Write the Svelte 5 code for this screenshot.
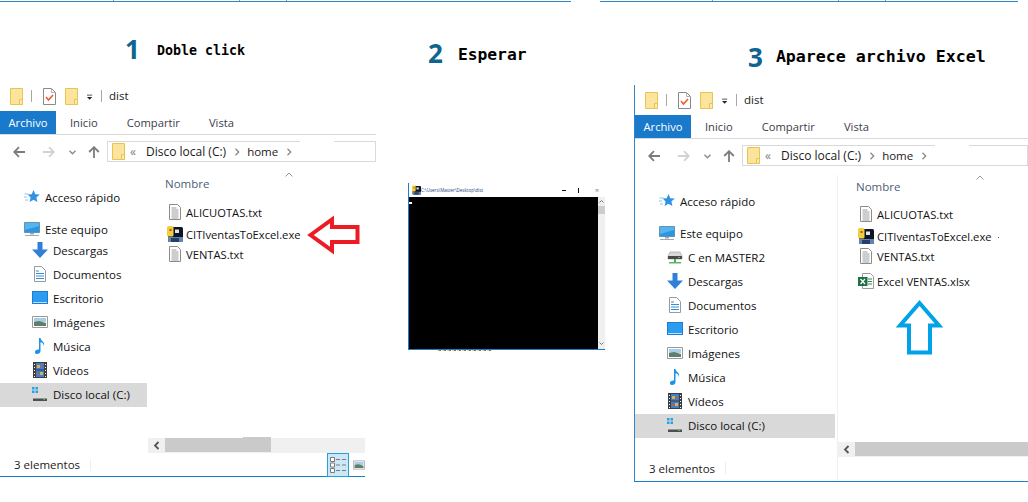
<script>
  const windows = [
    {
      key: 'first',
      extraDrive: false,
      files: [
        { name: 'ALICUOTAS.txt', icon: 'txt', gap: '' },
        { name: 'CITIventasToExcel.exe', icon: 'exe', gap: 'gap2' },
        { name: 'VENTAS.txt', icon: 'txt', gap: '' }
      ],
      count: '3 elementos'
    },
    {
      key: 'second',
      extraDrive: true,
      files: [
        { name: 'ALICUOTAS.txt', icon: 'txt', gap: '' },
        { name: 'CITIventasToExcel.exe', icon: 'exe', gap: 'gap2' },
        { name: 'VENTAS.txt', icon: 'txt', gap: '' },
        { name: 'Excel VENTAS.xlsx', icon: 'xlsx', gap: 'gap5' }
      ],
      count: '3 elementos'
    }
  ];
  const places = [
    { label: 'Descargas', icon: 'down' },
    { label: 'Documentos', icon: 'docs' },
    { label: 'Escritorio', icon: 'desk' },
    { label: 'Imágenes', icon: 'img' },
    { label: 'Música', icon: 'music' },
    { label: 'Vídeos', icon: 'film' }
  ];
</script>

{#snippet icon(id, cls)}
  <svg class={cls}><use href={'#' + id} /></svg>
{/snippet}

{#snippet explorer(w)}
  <section class={'explorer ' + w.key}>
    <div class="qat">
      {@render icon('folder', 'i13 q1')}
      <span class="qsep s1"></span>
      {@render icon('check', 'i13 q2')}
      {@render icon('folder', 'i13 q3')}
      {@render icon('qdown', 'i8 q4')}
      <span class="qsep s2"></span>
      <span class="qtitle">dist</span>
    </div>
    <nav class="tabs">
      <span class="tab active">Archivo</span>
      <span class="tab inicio">Inicio</span>
      <span class="tab compartir">Compartir</span>
      <span class="tab vista">Vista</span>
    </nav>
    <div class="navrow">
      {@render icon('back', 'i12 n1')}
      {@render icon('fwd', 'i12 n2')}
      {@render icon('chev', 'i7 n3')}
      {@render icon('up', 'i12 n4')}
      <div class="address">
        <span class="topgap"></span>
        {@render icon('folder', 'i13 a1')}
        <span class="crumb a2">«</span>
        <span class="crumb a3">Disco local (C:)</span>
        {@render icon('crumbsep', 'i6 a4')}
        <span class="crumb a5">home</span>
        {@render icon('crumbsep', 'i6 a6')}
      </div>
    </div>
    <div class="body">
      <aside class="side">
        <div class="row root">{@render icon('star', 'i16')}<span>Acceso rápido</span></div>
        <div class="row root pc">{@render icon('pc', 'i16')}<span>Este equipo</span></div>
        {#if w.extraDrive}
          <div class="row child">{@render icon('net', 'i16')}<span>C en MASTER2</span></div>
        {/if}
        {#each places as p, i}
          <div class={'row child' + (i === 0 ? ' firstplace' : '')}>{@render icon(p.icon, 'i16')}<span>{p.label}</span></div>
        {/each}
        <div class="row child selected">{@render icon('drive', 'i16')}<span>Disco local (C:)</span></div>
      </aside>
      <main class="files">
        <div class="head"><span>Nombre</span>{@render icon('sort', 'i8 sort')}</div>
        <div class="list">
          {#each w.files as f}
            <div class={'file ' + f.gap}>{@render icon(f.icon, 'i16')}<span>{f.name}</span></div>
          {/each}
        </div>
        <div class="hscroll">
          <span class="sarrow">{@render icon('sleft', 'i7')}</span>
          <span class="thumb"></span>
          <span class="thumb2"></span>
        </div>
      </main>
    </div>
    <footer class="status">
      <span>{w.count}</span><i class="ssep"></i>
      <span class="views">
        <span class="viewbtn">{@render icon('details', 'i16')}</span>
        {@render icon('img', 'i12b')}
      </span>
    </footer>
    <span class="divider"></span>
  </section>
{/snippet}

<div class="page">
  <svg class="sprite" aria-hidden="true">
    <defs>
      <symbol id="folder" viewBox="0 0 13 17"><path d="M.5.5h12v16H.5z" fill="#fde49c" stroke="#e8c452"/><path d="M9.5 11.5h3v5h-3z" fill="#fbe9b4" stroke="#e8c452"/></symbol>
      <symbol id="check" viewBox="0 0 13 17"><path d="M.5.5h8l4 4v12H.5z" fill="#fff" stroke="#8a8a8a"/><path d="M8.500.5v4h4" fill="none" stroke="#b0b0b0"/><path d="M3 9l2.500 3L10 7" fill="none" stroke="#ea5a2a" stroke-width="1.500"/></symbol>
      <symbol id="qdown" viewBox="0 0 8 8"><path d="M0 1.500h7" stroke="#222" stroke-width="1" fill="none"/><path d="M0 4h7L3.500 7.500z" fill="#222"/></symbol>
      <symbol id="back" viewBox="0 0 12 12"><path d="M12 6H1.500M6 1.200L1.200 6 6 10.800" fill="none" stroke="#7c7c7c" stroke-width="1.800"/></symbol>
      <symbol id="fwd" viewBox="0 0 12 12"><path d="M0 6h10.500M6 1.200L10.800 6 6 10.800" fill="none" stroke="#d2d2d2" stroke-width="1.800"/></symbol>
      <symbol id="chev" viewBox="0 0 7 5"><path d="M.5.800l3 3 3-3" fill="none" stroke="#8a8a8a" stroke-width="1.400"/></symbol>
      <symbol id="up" viewBox="0 0 12 12"><path d="M6 12V1.500M1.200 6L6 1.200 10.800 6" fill="none" stroke="#7c7c7c" stroke-width="1.800"/></symbol>
      <symbol id="crumbsep" viewBox="0 0 6 8"><path d="M1.500.800L4.700 4 1.500 7.200" fill="none" stroke="#8a8a8a" stroke-width="1.300"/></symbol>
      <symbol id="star" viewBox="0 0 16 16"><path d="M9.500 1l1.800 4.200 4.500.4-3.400 3 1 4.400-3.900-2.300-3.900 2.300 1-4.400-3-3 4.100-.4z" fill="#2f92e4"/><path d="M.5 5h4M0 8h3M1 11h3" stroke="#8cc4ee" fill="none"/></symbol>
      <symbol id="pc" viewBox="0 0 16 16"><path d="M.5 1.500h15v10H.5z" fill="#2b96e2" stroke="#5f93b8"/><path d="M1 2h14v3L1 9z" fill="#56b4ef"/><path d="M6 12h4v1.500H6zM1 14h14v1H1z" fill="#a3a9ad"/></symbol>
      <symbol id="net" viewBox="0 0 16 16"><path d="M3 3h10l2 4v3H1V7z" fill="#d9d9d9" stroke="#9a9a9a" stroke-width=".6"/><path d="M1 7h14v3H1z" fill="#4a4a4a"/><path d="M11 8h2v1h-2z" fill="#35d05a"/><path d="M7 10h2v3H7z" fill="#4caf50"/><path d="M2 13h12v1.500H2z" fill="#5cb85c"/></symbol>
      <symbol id="down" viewBox="0 0 16 16"><path d="M5.500 0h5v7.500H16L8 16 0 7.500h5.500z" fill="#2f80d6"/></symbol>
      <symbol id="docs" viewBox="0 0 16 16"><path d="M2.500.5h7l4 4v11h-11z" fill="#fff" stroke="#9a9a9a"/><path d="M4 5h3M4 7.500h8M4 10h8M4 12.500h8" stroke="#2f8fdc" fill="none"/></symbol>
      <symbol id="desk" viewBox="0 0 16 16"><path d="M0 1h16v13H0z" fill="#1a7fd4"/><path d="M1 2h14v10H1z" fill="#2c9cf0"/><path d="M1 12.500h14" stroke="#bfe0f7" fill="none"/></symbol>
      <symbol id="img" viewBox="0 0 16 16"><path d="M.5 2.500h15v11H.5z" fill="#fff" stroke="#9a9a9a"/><path d="M2 4h12v4H2z" fill="#a9cfe8"/><path d="M2 8l5-1 7 2v3H2z" fill="#5d7f6b"/></symbol>
      <symbol id="music" viewBox="0 0 16 16"><path d="M7 0h1.500c.4 3 4.500 3.500 3.500 8-.4-2.500-2-3.500-3.500-3.800V13c0 1.800-1.800 3-3.500 3S3 15 3 13.700 4.600 11.200 7 11.500z" fill="#1e93e6"/></symbol>
      <symbol id="film" viewBox="0 0 16 16"><path d="M1 0h14v16H1z" fill="#3d3d3d"/><path d="M4 1h8v6.500H4z" fill="#3f7fd0"/><path d="M4 8.500h8V15H4z" fill="#3f7fd0"/><path d="M5 3h3v3H5zM8 10h3v3H8z" fill="#e0b040"/><path d="M9 3h2v2H9zM5 11h2v2H5z" fill="#c85a4a"/><path d="M2 2h1v1H2zM2 5h1v1H2zM2 8h1v1H2zM2 11h1v1H2zM2 14h1v1H2zM13 2h1v1h-1zM13 5h1v1h-1zM13 8h1v1h-1zM13 11h1v1h-1zM13 14h1v1h-1z" fill="#fff"/></symbol>
      <symbol id="drive" viewBox="0 0 16 16"><path d="M0 1h2.500v2.500H0zM3.500 1H6v2.500H3.500zM0 4.500h2.500V7H0zM3.500 4.500H6V7H3.500z" fill="#29a3e8"/><path d="M3 9h9l3 2.500v1H1v-1z" fill="#dcdcdc"/><path d="M1 12.500h14V15H1z" fill="#4f4f4f"/><path d="M11.500 13h1.500v1h-1.500z" fill="#35d05a"/></symbol>
      <symbol id="txt" viewBox="0 0 16 16"><path d="M2.500.5h8l3 3v12h-11z" fill="#fff" stroke="#8c8c8c"/><path d="M4.500 4h5M4.500 6h7M4.500 8h7M4.500 10h7M4.500 12h7M4.500 14h7" stroke="#9c9c9c" fill="none"/></symbol>
      <symbol id="exe" viewBox="0 0 16 16"><rect x="1" y="1" width="15" height="15" rx="1.500" fill="#0c1626"/><path d="M1 11h15v3.500c0 1-.5 1.500-1.500 1.500h-12C1.500 16 1 15.500 1 14.500z" fill="#6284ad"/><path d="M4 12h8v4H4z" fill="#24406a"/><path d="M0 1.500C0 .5 1 0 2 0h3c1 0 1.500 1 1.500 2v7c0 1-.8 1.500-2 1.500H2c-1 0-2-.5-2-1.500z" fill="#f5cc40"/><path d="M8 3.500h4v3.500H8z" fill="#e6e6e6"/><path d="M2.500 3h2v2h-2z" fill="#8a6a14"/></symbol>
      <symbol id="xlsx" viewBox="0 0 16 16"><path d="M4.500.5h8l3 3v12h-11z" fill="#fff" stroke="#9a9a9a"/><path d="M10 6h4M10 8.500h4M10 11h4" stroke="#2f8a55" fill="none"/><path d="M0 4h9.500v9H0z" fill="#1d7044"/><path d="M2.500 6l4.500 5M7 6l-4.500 5" stroke="#fff" stroke-width="1.200" fill="none"/></symbol>
      <symbol id="sort" viewBox="0 0 8 5"><path d="M.5 4.500L4 1l3.500 3.500" fill="none" stroke="#9a9a9a"/></symbol>
      <symbol id="sleft" viewBox="0 0 7 9"><path d="M5.500 1L2 4.500 5.500 8" fill="none" stroke="#555" stroke-width="1.800"/></symbol>
      <symbol id="details" viewBox="0 0 16 16"><path d="M.5.500h4v4h-4zM.5 6h4v4h-4zM.5 11.500h4v4h-4z" fill="#fff" stroke="#7a7a7a"/><path d="M6 2.500h4M12 2.500h4M6 8h4M12 8h4M6 13.500h4M12 13.500h4" stroke="#7a7a7a" fill="none"/></symbol>
    </defs>
  </svg>

  <span class="rule ruleA"><i class="t1"></i><i class="t2"></i><i class="t3"></i></span>
  <span class="rule ruleB"><i class="t1"></i><i class="t2"></i><i class="t3"></i></span>

  <h2 class="caption c1"><b>1</b><span>Doble click</span></h2>
  <h2 class="caption c2"><b>2</b><span>Esperar</span></h2>
  <h2 class="caption c3"><b>3</b><span>Aparece archivo Excel</span></h2>

  {@render explorer(windows[0])}
  {@render explorer(windows[1])}

  <div class="console">
    <div class="ctitle">
      {@render icon('exe', 'i9')}
      <span class="ctext">C:\Users\Master\Desktop\dist</span>
      <span class="cbtns"><i class="cmin"></i><i class="cmax"></i><i class="cclose">×</i></span>
    </div>
    <div class="cbody">
      <div class="cscreen"><span class="cursor"></span></div>
      <div class="cscroll">
        <svg class="carrow" viewBox="0 0 7 5"><path d="M1.500 3.500L3.500 1.500 5.500 3.500" fill="none" stroke="#777"/></svg>
        <span class="cthumb"></span>
        <svg class="carrow cbottom" viewBox="0 0 7 5"><path d="M1.500 1.500L3.500 3.500 5.500 1.500" fill="none" stroke="#777"/></svg>
      </div>
    </div>
    <span class="cresidue"></span>
  </div>

  <svg class="annot">
    <polygon points="310.500,235 332,219.500 332,227 357.500,227 357.500,242 332,242 332,250.500" fill="#fff" stroke="#ed1c24" stroke-width="4"/>
    <polygon points="919.500,303 900,325.500 909,325.500 909,352.500 930,352.500 930,325.500 939,325.500" fill="#fff" stroke="#00a2e8" stroke-width="4"/>
    <rect x="998" y="237" width="1" height="1" fill="#ed1c24"/>
  </svg>
</div>

<style>
  :global(body) { margin: 0; background: #fff; }
  .page {
    position: relative;
    width: 1028px;
    height: 502px;
    overflow: hidden;
    background: #fff;
    font-family: "Open Sans", "Noto Sans", sans-serif;
    font-size: 11.5px;
    color: #1a1a1a;
  }
  .sprite { position: absolute; width: 0; height: 0; }
  svg { display: block; flex: none; }
  .i16 { width: 16px; height: 16px; }
  .i13 { width: 13px; height: 17px; }
  .i12 { width: 12px; height: 12px; }
  .i12b { width: 12px; height: 16px; }
  .i9 { width: 9px; height: 10px; }
  .i8 { width: 8px; height: 6px; }
  .i7 { width: 7px; height: 5px; }
  .i6 { width: 6px; height: 8px; }

  .rule { position: absolute; top: 1px; height: 1px; background: #2e86c8; }
  .ruleA { left: 0; width: 571px; }
  .ruleB { left: 600px; width: 418px; }
  .rule i { position: absolute; top: -1px; width: 1px; height: 1px; background: #9a9a9a; }
  .ruleA .t1 { left: 113px; }
  .ruleA .t2 { left: 239px; }
  .ruleA .t3 { left: 286px; }
  .ruleB .t1 { left: 112px; }
  .ruleB .t2 { left: 238px; }
  .ruleB .t3 { left: 285px; }

  .caption {
    position: absolute;
    margin: 0;
    display: flex;
    align-items: center;
    font-weight: 400;
  }
  .caption b {
    font-family: "Open Sans", sans-serif;
    font-size: 26px;
    font-weight: 700;
    line-height: 30px;
    color: #0f6590;
  }
  .caption span {
    font-family: "DejaVu Sans Mono", monospace;
    font-weight: 700;
    color: #000;
  }
  .c1 { left: 125px; top: 34px; }
  .c1 span { font-size: 13.300px; margin-left: 17px; margin-top: 3px; }
  .c2 { left: 428px; top: 38px; }
  .c2 span { font-size: 16.300px; margin-left: 15px; margin-top: 2px; }
  .c3 { left: 748px; top: 42px; }
  .c3 span { font-size: 16.600px; margin-left: 13px; margin-top: -2px; }

  .explorer { position: absolute; display: flex; flex-direction: column; }
  .first { left: 0; top: 86px; width: 376px; }
  .second { left: 634px; top: 85px; width: 394px; height: 397px; border-left: 1px solid #2e86c8; padding-top: 5px; box-sizing: border-box; }

  .qat { height: 20px; margin-bottom: 5px; display: flex; align-items: center; }
  .q1 { margin-left: 10px; }
  .qsep { width: 1px; height: 12px; background: #a8a8a8; }
  .s1 { margin-left: 8px; }
  .q2 { margin-left: 11px; }
  .q3 { margin-left: 9px; }
  .q4 { margin-left: 8px; margin-top: 2px; }
  .s2 { margin-left: 7px; }
  .qtitle { margin-left: 7px; font-size: 11.500px; color: #222; margin-top: -1px; }

  .tabs { height: 23px; display: flex; align-items: center; border-bottom: 1px solid #d9d9d9; color: #3c3c4a; font-size: 11.200px; }
  .tab { line-height: 23px; }
  .active { width: 56px; text-align: center; background: #1979ca; color: #fff; }
  .inicio { margin-left: 14px; }
  .compartir { margin-left: 29px; }
  .vista { margin-left: 29px; }

  .navrow { height: 31px; display: flex; align-items: flex-start; }
  .n1 { margin: 11px 0 0 13px; }
  .n2 { margin: 11px 0 0 18px; }
  .n3 { margin: 15px 0 0 14px; }
  .n4 { margin: 11px 0 0 12px; }
  .address {
    position: relative;
    margin: 6px 0 0 7px;
    flex: 1;
    height: 21px;
    box-sizing: border-box;
    border: 1px solid #d9d9d9;
    display: flex;
    align-items: center;
    font-size: 12px;
    color: #1a1a1a;
  }
  .topgap { position: absolute; left: 192px; top: -1px; width: 34px; height: 1px; background: #fff; }
  .a1 { margin-left: 4px; }
  .a2 { margin-left: 5px; color: #808080; width: 11px; }
  .a3 { margin-left: 5px; }
  .a4 { margin-left: 8px; }
  .a5 { margin-left: 7px; font-size: 11.500px; }
  .a6 { margin-left: 8px; }

  .body { display: flex; height: 287px; }
  .first .body { width: 365px; }
  .side { width: 147px; padding-top: 20px; flex: none; box-sizing: border-box; }
  .second .side { width: 200px; }
  .row { height: 24px; box-sizing: border-box; padding-bottom: 2px; display: flex; align-items: center; color: #111; }
  .row > span { margin-left: 5px; white-space: nowrap; }
  .root { padding-left: 24px; }
  .pc { margin-top: 8px; }
  .child { padding-left: 32px; }
  .first .firstplace { margin-top: -3px; }
  .selected { background: #d9d9d9; }

  .files { flex: 1; display: flex; flex-direction: column; padding-left: 1px; min-width: 0; }
  .second .files { padding-left: 3px; }
  .head { display: flex; height: 24px; margin-top: 5px; align-items: center; padding-left: 17px; color: #4d6078; }
  .second .head { margin-top: 4px; padding-left: 18px; }
  .head > span { width: 45px; }
  .sort { margin-left: 75px; margin-top: -18px; height: 5px; }
  .list { flex: 1; padding-top: 7px; padding-left: 19px; font-size: 11.200px; }
  .second .list { padding-left: 20px; padding-top: 6px; }
  .file { height: 20px; display: flex; align-items: center; color: #111; }
  .file > span { margin-left: 3px; white-space: nowrap; }
  .gap2 { margin-top: 2px; }
  .gap5 { margin-top: 5px; }

  .hscroll { height: 15px; display: flex; background: #f0f0f0; flex: none; }
  .sarrow { width: 17px; display: flex; align-items: center; justify-content: center; }
  .sarrow svg { height: 9px; }
  .thumb { width: 78px; height: 14px; background: #cacaca; }
  .thumb2 { width: 28px; height: 15px; margin-top: -1px; background: #cacaca; }
  .second .thumb { flex: 1; }
  .second .thumb2 { display: none; }

  .status { height: 23px; display: flex; align-items: center; padding-left: 14px; border-bottom: 1px solid #1a7ecb; color: #222; position: relative; }
  .first .status { width: 351px; }
  .second .status { height: 24px; box-sizing: border-box; height: 25px; padding-bottom: 2px; }
  .ssep { width: 1px; height: 12px; background: #eeeeee; margin-left: 10px; }
  .views { margin-left: auto; display: flex; align-items: center; gap: 4px; height: 100%; }
  .second .views { display: none; }
  .viewbtn { width: 20px; height: 22px; background: #cce8f6; border: 1px solid #26a0da; display: flex; align-items: center; justify-content: center; }
  .divider { display: none; }
  .second .divider { display: block; position: absolute; left: 202px; top: 90px; bottom: 1px; width: 1px; background: #f0f0f0; }

  .console { position: absolute; left: 408px; top: 183px; width: 197px; height: 167px; border-left: 1px solid #1a7ecb; border-bottom: 1px solid #1a7ecb; box-sizing: border-box; display: flex; flex-direction: column; }
  .ctitle { height: 14px; display: flex; align-items: center; padding-left: 3px; flex: none; }
  .ctext { font-size: 4.500px; margin-left: 0; white-space: nowrap; color: #23447a; }
  .cbtns { margin-left: auto; display: flex; align-items: center; margin-right: 6px; font-size: 7px; color: #111; }
  .cbtns i { font-style: normal; display: block; }
  .cmin { width: 4px; height: 1px; background: #111; }
  .cmax { width: 1px; height: 5px; background: #111; margin-left: 12px; }
  .cclose { margin-left: 16px; color: #777; line-height: 7px; }
  .cbody { flex: 1; display: flex; }
  .cscreen { flex: 1; background: #000; position: relative; }
  .cursor { position: absolute; left: 0; top: 5px; width: 3px; height: 2px; background: #fff; }
  .cscroll { width: 7px; background: #f0f0f0; display: flex; flex-direction: column; }
  .carrow { width: 7px; height: 5px; margin-top: 2px; }
  .cbottom { margin-top: auto; margin-bottom: 3px; }
  .cthumb { display: block; margin-top: 2px; height: 8px; background: #cdcdcd; }
  .cresidue { position: absolute; left: 28px; top: 100%; width: 55px; height: 1px; margin-top: 1px; background: repeating-linear-gradient(90deg, #e8c452 0 2px, #2a3a6a 2px 4px, #fff 4px 5px); opacity: .7; }

  .annot { position: absolute; left: 0; top: 0; width: 1028px; height: 502px; pointer-events: none; }
</style>
